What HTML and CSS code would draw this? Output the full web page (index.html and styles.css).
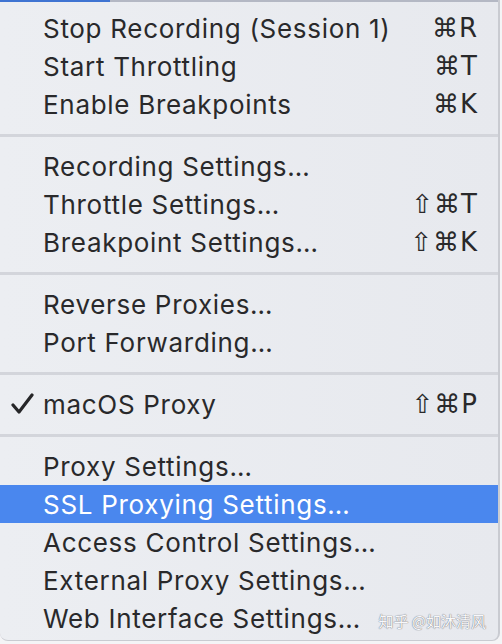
FILE: index.html
```html
<!DOCTYPE html>
<html>
<head>
<meta charset="utf-8">
<link rel="stylesheet" href="styles.css">
</head>
<body>
<div class="menu">
  <div class="topbar"><span class="topbar-active"></span></div>
  <div class="items">
    <div class="row"><span class="check"></span><span class="label">Stop Recording (Session 1)</span><span class="key">⌘R</span></div>
    <div class="row"><span class="check"></span><span class="label">Start Throttling</span><span class="key">⌘T</span></div>
    <div class="row"><span class="check"></span><span class="label">Enable Breakpoints</span><span class="key">⌘K</span></div>
    <div class="sep"></div>
    <div class="row"><span class="check"></span><span class="label">Recording Settings…</span><span class="key"></span></div>
    <div class="row"><span class="check"></span><span class="label">Throttle Settings…</span><span class="key">⇧⌘T</span></div>
    <div class="row"><span class="check"></span><span class="label">Breakpoint Settings…</span><span class="key">⇧⌘K</span></div>
    <div class="sep"></div>
    <div class="row"><span class="check"></span><span class="label">Reverse Proxies…</span><span class="key"></span></div>
    <div class="row"><span class="check"></span><span class="label">Port Forwarding…</span><span class="key"></span></div>
    <div class="sep"></div>
    <div class="row"><span class="check"><svg width="24" height="22" viewBox="0 0 24 22"><path d="M2 12 L8 19 L21 2" fill="none" stroke="#262628" stroke-width="3.2" stroke-linecap="round" stroke-linejoin="round"/></svg></span><span class="label">macOS Proxy</span><span class="key">⇧⌘P</span></div>
    <div class="sep"></div>
    <div class="row"><span class="check"></span><span class="label">Proxy Settings…</span><span class="key"></span></div>
    <div class="row selected"><span class="check"></span><span class="label">SSL Proxying Settings…</span><span class="key"></span></div>
    <div class="row"><span class="check"></span><span class="label">Access Control Settings…</span><span class="key"></span></div>
    <div class="row"><span class="check"></span><span class="label">External Proxy Settings…</span><span class="key"></span></div>
    <div class="row"><span class="check"></span><span class="label">Web Interface Settings…</span><span class="key"></span></div>
  </div>
  <div class="watermark">知乎 @如沐清风</div>
</div>
</body>
</html>
```
FILE: styles.css
```css
html, body {
  margin: 0;
  padding: 0;
  background: #f4f4f6;
}
body {
  width: 502px;
  height: 644px;
  overflow: hidden;
  font-family: "Inter", "Liberation Sans", Arial, sans-serif;
}
.menu {
  position: relative;
  width: 500px;
  height: 641px;
  background: linear-gradient(90deg, #eceef2 0%, #e7e9ee 100%);
  border-right: 2px solid #c9cbd1;
  border-bottom: 1px solid #c9cbd1;
  border-radius: 0 0 8px 8px;
  box-sizing: border-box;
}
.topbar {
  height: 2px;
  background: #b4b8c4;
  display: flex;
}
.topbar-active {
  width: 110px;
  background: #3f74d2;
}
.items {
  padding-top: 7px;
  display: flex;
  flex-direction: column;
}
.row {
  height: 38px;
  display: flex;
  align-items: center;
  font-size: 26px;
  letter-spacing: 0.7px;
  color: #29292b;
}
.check {
  width: 43px;
  box-sizing: border-box;
  padding-left: 11px;
  display: flex;
  align-items: center;
}
.label {
  flex: 1;
}
.key {
  padding-right: 20px;
  font-family: "DejaVu Sans", "Liberation Sans", sans-serif;
  font-size: 26px;
  letter-spacing: 1px;
}
.selected {
  background: #4a87ee;
  color: #ffffff;
}
.sep {
  height: 24px;
  display: flex;
  align-items: center;
}
.sep::before {
  content: "";
  flex: 1;
  height: 3px;
  background: #d3d5db;
}
.watermark {
  position: absolute;
  right: 12px;
  bottom: 9px;
  font-family: "Noto Sans CJK SC", sans-serif;
  font-size: 15px;
  color: #f8f8fa;
  text-shadow: 0 0 1px #7a7c84, 0 0 1px #7a7c84;
}
```
